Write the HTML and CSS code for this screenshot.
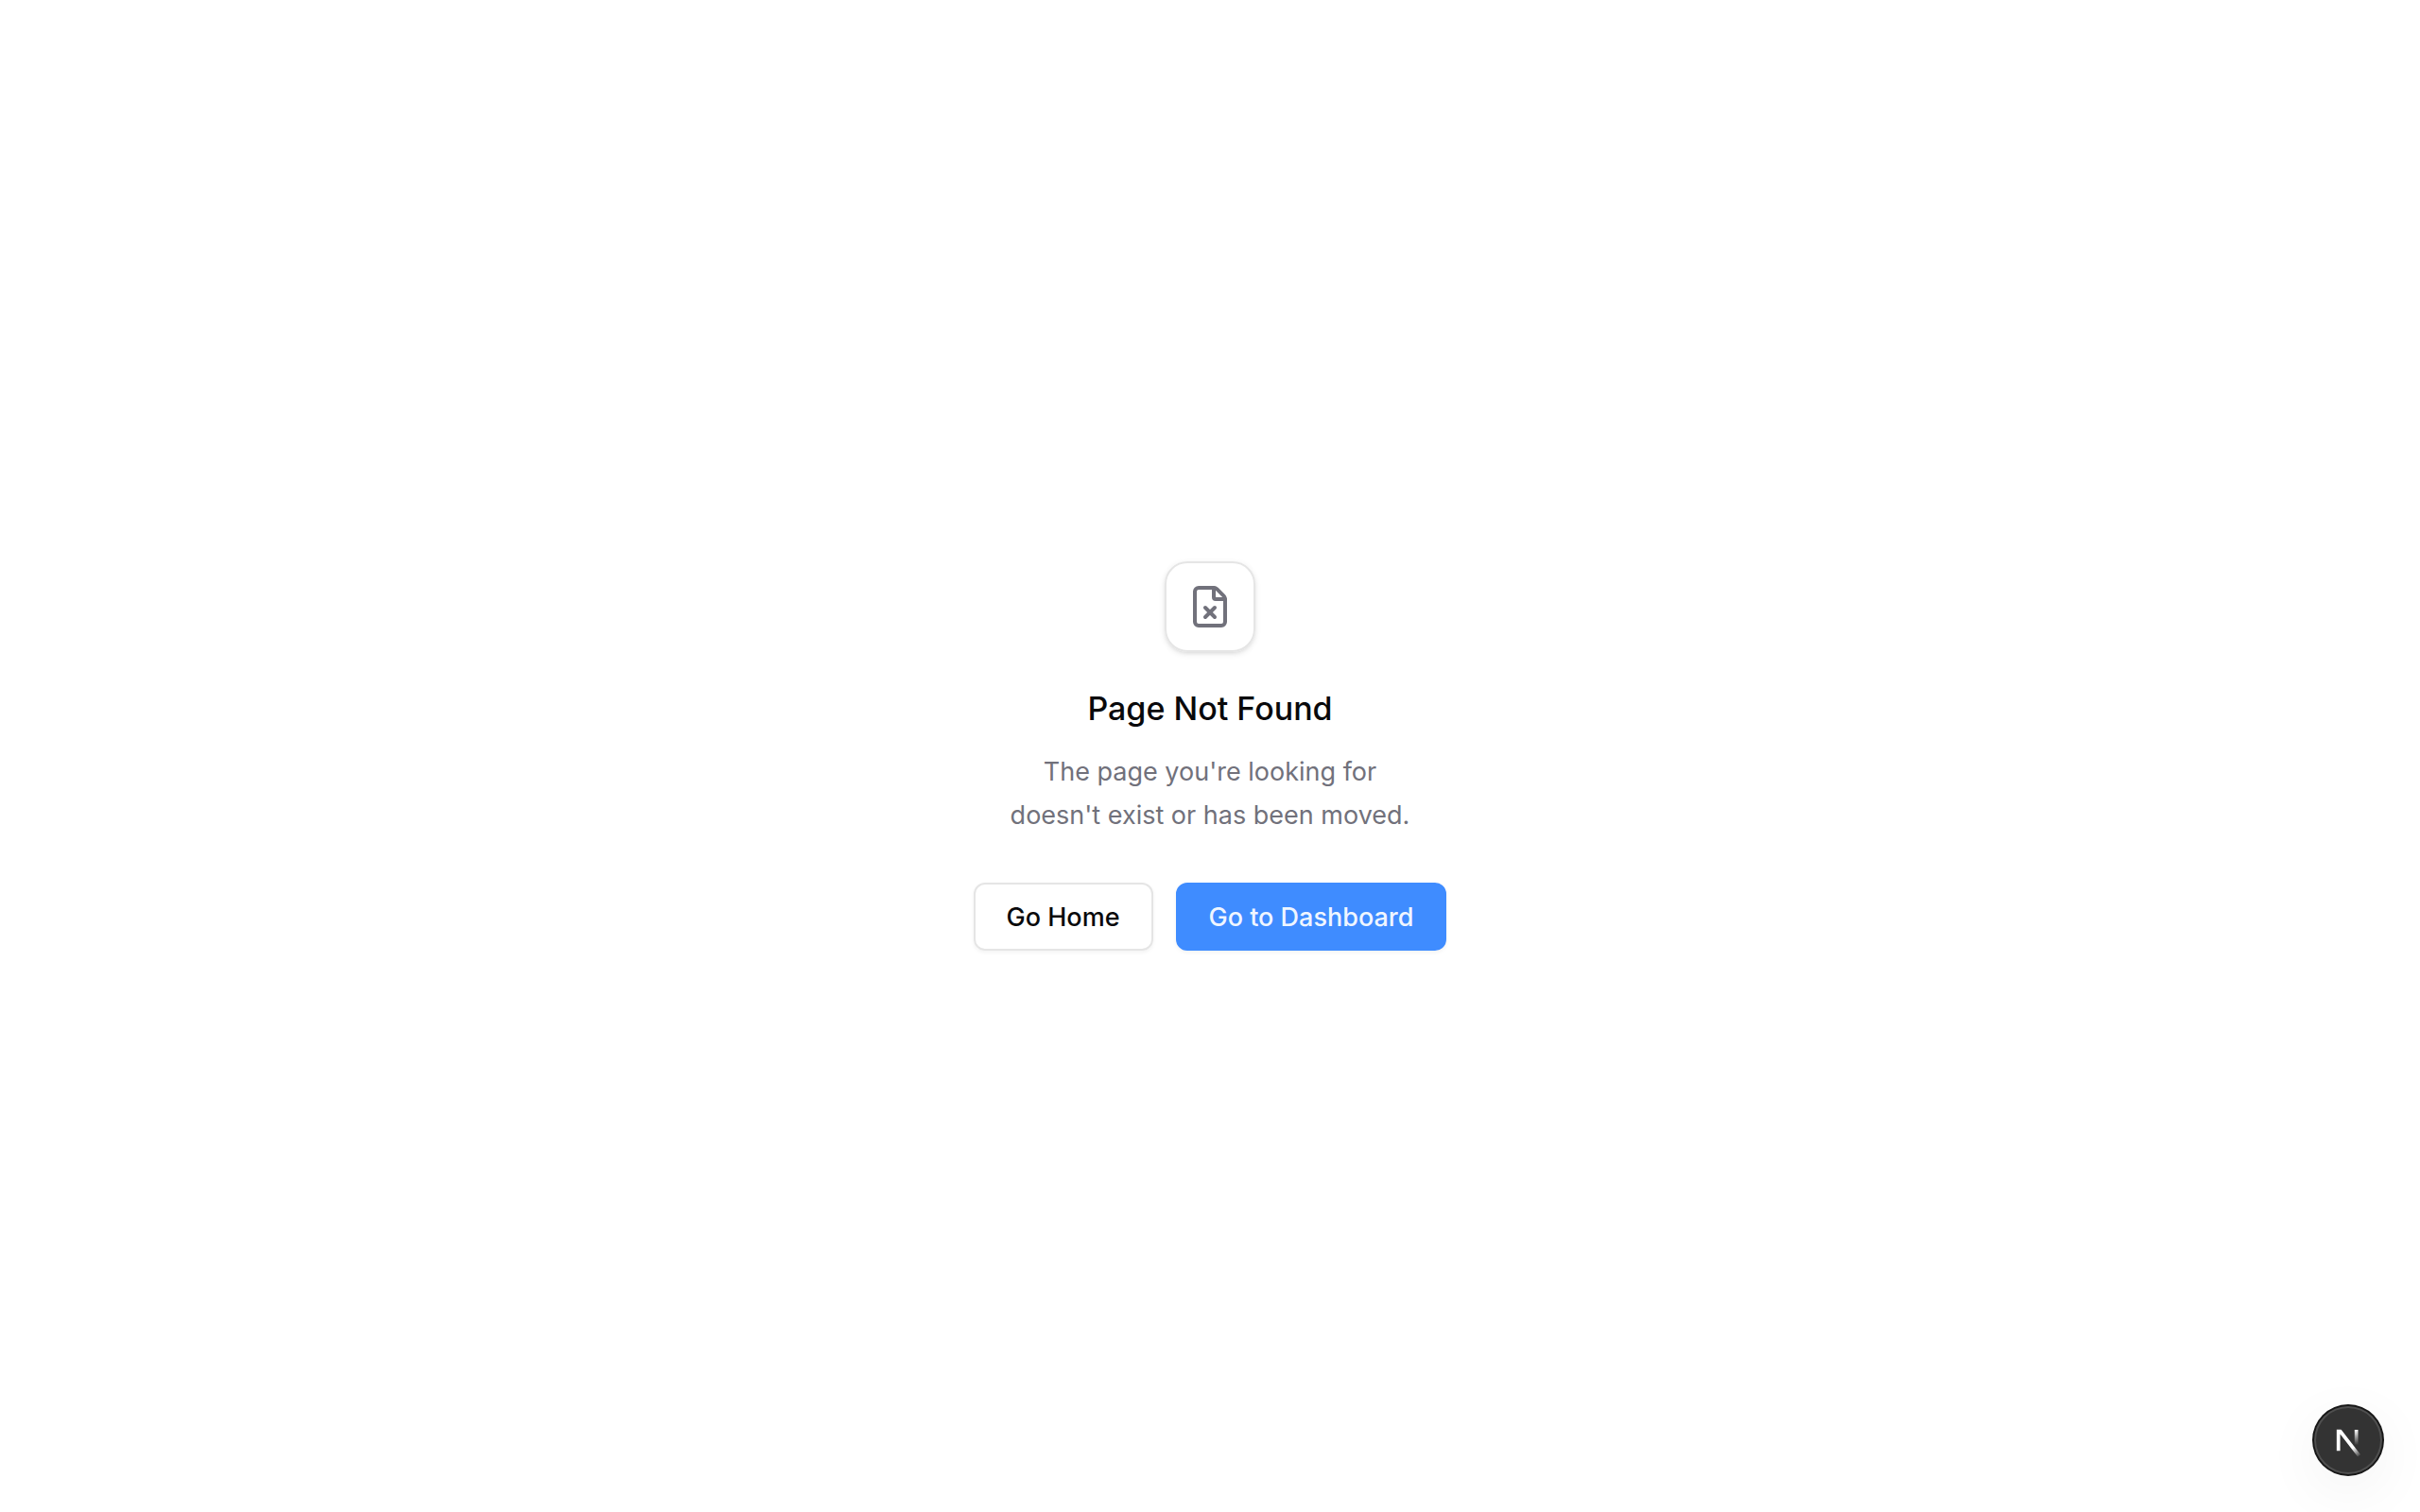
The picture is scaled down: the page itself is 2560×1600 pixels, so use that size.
FILE: index.html
```html
<!DOCTYPE html>
<html lang="en">
<head>
<meta charset="utf-8">
<meta name="viewport" content="width=device-width, initial-scale=1">
<title>Page Not Found</title>
<link rel="stylesheet" href="styles.css">
</head>
<body>
<main class="empty">
  <div class="empty-media">
    <svg class="empty-icon" viewBox="0 0 24 24" fill="none" stroke="currentColor" stroke-width="2" stroke-linecap="round" stroke-linejoin="round" aria-hidden="true">
      <path d="M6 22a2 2 0 0 1-2-2V4a2 2 0 0 1 2-2h8a2.4 2.4 0 0 1 1.704.706l3.588 3.588A2.4 2.4 0 0 1 20 8v12a2 2 0 0 1-2 2z"/>
      <path d="M14 2v5a1 1 0 0 0 1 1h5"/>
      <path d="m14.5 12.5-5 5"/>
      <path d="m9.5 12.5 5 5"/>
    </svg>
  </div>
  <h1 class="empty-title">Page Not Found</h1>
  <p class="empty-text">The page you're looking for<br>doesn't exist or has been moved.</p>
  <div class="actions">
    <a class="btn btn-outline" href="#home">Go Home</a>
    <a class="btn btn-primary" href="#dashboard">Go to Dashboard</a>
  </div>
</main>
<button class="dev-badge" type="button" aria-label="Open developer tools">
  <svg class="dev-logo" viewBox="0 0 40 40" fill="none" aria-hidden="true">
    <defs>
      <linearGradient id="diag" x1="9.956" y1="11.123" x2="13.7" y2="15.8" gradientUnits="userSpaceOnUse">
        <stop stop-color="#fff"/><stop offset="1" stop-color="#fff" stop-opacity="0"/>
      </linearGradient>
      <linearGradient id="stem" x1="11.822" y1="1.4" x2="11.797" y2="9.625" gradientUnits="userSpaceOnUse">
        <stop stop-color="#fff"/><stop offset="1" stop-color="#fff" stop-opacity="0"/>
      </linearGradient>
      <clipPath id="top"><path d="M0 1.4h16V17H0z"/></clipPath>
    </defs>
    <g transform="translate(12.5 13)" stroke-width="1.86" clip-path="url(#top)">
      <path d="M13.3 15.2 2.34 1v11.6" stroke="url(#diag)"/>
      <path d="M11.825 1.5v11.6" stroke="url(#stem)"/>
    </g>
  </svg>
</button>
</body>
</html>
```
FILE: styles.css
```css
* {
  box-sizing: border-box;
}

body {
  margin: 0;
  min-height: 100vh;
  display: flex;
  align-items: center;
  justify-content: center;
  background: #fff;
  color: #09090b;
  font-family: Inter, "Liberation Sans", sans-serif;
}

.empty {
  display: flex;
  flex-direction: column;
  align-items: center;
  text-align: center;
}

.empty-media {
  width: 96px;
  height: 96px;
  display: flex;
  align-items: center;
  justify-content: center;
  border: 2px solid #e5e5e5;
  border-radius: 24px;
  color: #71717b;
  box-shadow: 0 2px 6px rgba(0, 0, 0, 0.1), 0 2px 4px -2px rgba(0, 0, 0, 0.1);
}

.empty-icon {
  width: 48px;
  height: 48px;
}

.empty-title {
  margin: 36px 0 0;
  font-size: 34px;
  line-height: 48px;
  font-weight: 500;
}

.empty-text {
  margin: 20px 0 0;
  color: #71717b;
  font-size: 27px;
  line-height: 46px;
}

.actions {
  display: flex;
  gap: 24px;
  margin-top: 48px;
}

.btn {
  height: 72px;
  display: flex;
  align-items: center;
  padding: 0 33px;
  border: 2px solid transparent;
  border-radius: 12px;
  font-size: 27px;
  font-weight: 500;
  text-decoration: none;
  white-space: nowrap;
  box-shadow: 0 2px 4px rgba(0, 0, 0, 0.05);
}

.btn-outline {
  border-color: #e5e5e5;
  color: #09090b;
}

.btn-primary {
  border-color: #3f8cff;
  background: #3f8cff;
  color: #eff6ff;
}

.dev-badge {
  position: fixed;
  right: 40px;
  bottom: 40px;
  width: 72px;
  height: 72px;
  display: flex;
  align-items: center;
  justify-content: center;
  padding: 0;
  border: 0;
  border-radius: 50%;
  background: #333;
  box-shadow: 0 0 0 2px #171717, inset 0 0 0 2px rgba(255, 255, 255, 0.14), 0 16px 64px rgba(0, 0, 0, 0.06);
}

.dev-logo {
  flex: none;
  width: 80px;
  height: 80px;
}
```
